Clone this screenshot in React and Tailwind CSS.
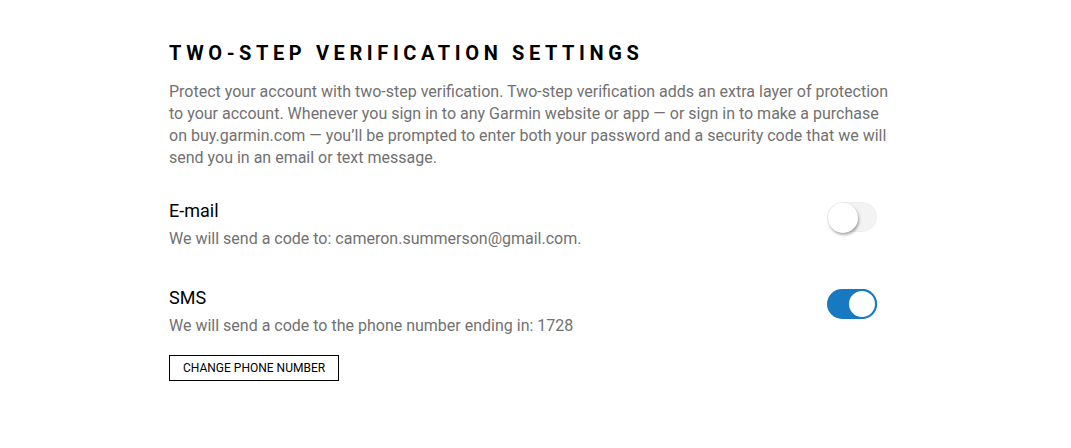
import React, { useState } from 'react';

const Toggle = ({ on, onChange }) => (
  <button
    type="button"
    onClick={onChange}
    className={`relative w-[50px] h-[30px] rounded-full shrink-0 ${
      on ? 'bg-[#1779c2]' : 'bg-[#f3f3f3] border border-[#eeeeee]'
    }`}
  >
    <span
      className={`absolute top-0 w-[30px] h-[30px] rounded-full bg-white ${
        on
          ? 'right-0 border-2 border-[#1779c2]'
          : 'left-0 -top-px shadow-[1px_2px_3px_rgba(0,0,0,0.35)]'
      }`}
    />
  </button>
);

const Setting = ({ title, desc, on, onChange, children }) => (
  <div className="flex justify-between items-start">
    <div>
      <h3 className="text-[18px] leading-6 text-black">{title}</h3>
      <p className="mt-[5px] text-[16px] leading-[22px] text-[#717171]">{desc}</p>
      {children}
    </div>
    <div className="mt-[3px] mr-[12px]">
      <Toggle on={on} onChange={onChange} />
    </div>
  </div>
);

const App = () => {
  const [email, setEmail] = useState(false);
  const [sms, setSms] = useState(true);

  return (
    <div className="min-h-screen bg-white font-['Roboto',sans-serif]">
      <div className="ml-[169px] w-[720px] pt-[41px]">
        <h1 className="text-[20px] leading-6 font-bold tracking-[0.23em] text-black">
          TWO-STEP VERIFICATION SETTINGS
        </h1>
        <p className="mt-[16px] text-[16px] leading-[22px] text-[#717171]">
          Protect your account with two-step verification. Two-step verification adds an extra layer of protection
          to your account. Whenever you sign in to any Garmin website or app — or sign in to make a purchase
          on buy.garmin.com — you’ll be prompted to enter both your password and a security code that we will
          send you in an email or text message.
        </p>

        <div className="mt-[30px] space-y-[36px]">
          <Setting
            title="E-mail"
            desc="We will send a code to: cameron.summerson@gmail.com."
            on={email}
            onChange={() => setEmail(!email)}
          />
          <Setting
            title="SMS"
            desc="We will send a code to the phone number ending in: 1728"
            on={sms}
            onChange={() => setSms(!sms)}
          >
            <button className="mt-[18px] h-[26px] px-[13px] border border-black text-[12px] leading-none text-black uppercase">
              Change phone number
            </button>
          </Setting>
        </div>
      </div>
    </div>
  );
};

export default App;
